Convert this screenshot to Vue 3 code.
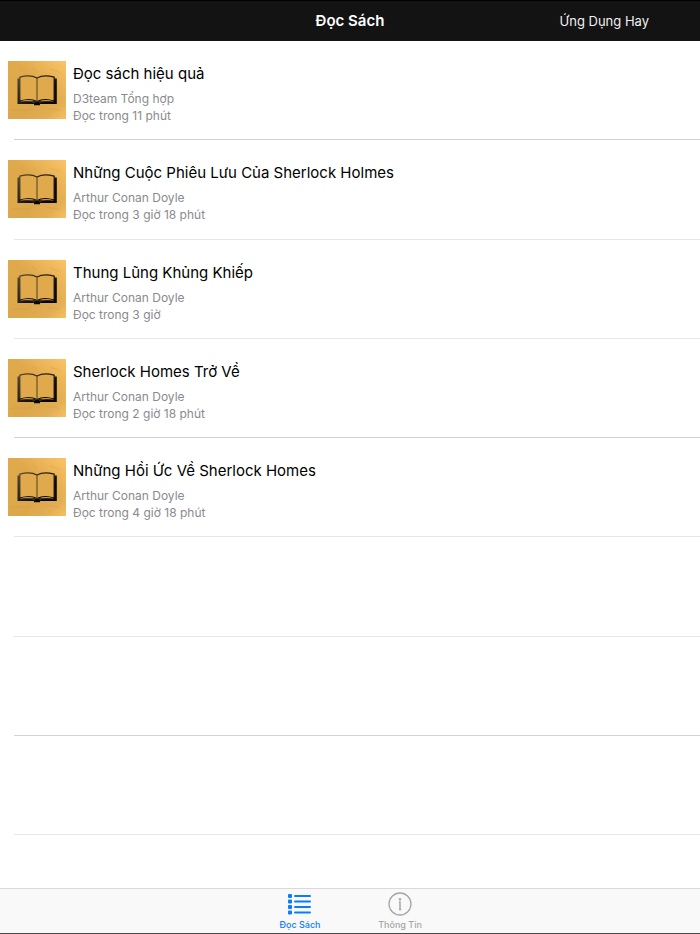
<script setup>
import { ref } from 'vue'

const books = [
  { title: 'Đọc sách hiệu quả', author: 'D3team Tổng hợp', time: 'Đọc trong 11 phút' },
  { title: 'Những Cuộc Phiêu Lưu Của Sherlock Holmes', author: 'Arthur Conan Doyle', time: 'Đọc trong 3 giờ 18 phút' },
  { title: 'Thung Lũng Khủng Khiếp', author: 'Arthur Conan Doyle', time: 'Đọc trong 3 giờ' },
  { title: 'Sherlock Homes Trở Về', author: 'Arthur Conan Doyle', time: 'Đọc trong 2 giờ 18 phút' },
  { title: 'Những Hồi Ức Về Sherlock Homes', author: 'Arthur Conan Doyle', time: 'Đọc trong 4 giờ 18 phút' },
]
const emptyRows = 3
const tab = ref('read')
</script>

<template>
  <div class="app">
    <svg class="defs" aria-hidden="true">
      <defs>
        <linearGradient id="gold" x1="0" y1="0" x2="1" y2="1">
          <stop offset="0" stop-color="#e0aa4c" />
          <stop offset="0.3" stop-color="#dfa94b" />
          <stop offset="0.6" stop-color="#dca74b" />
          <stop offset="0.82" stop-color="#e3ae53" />
          <stop offset="1" stop-color="#f6bf64" />
        </linearGradient>
        <linearGradient id="shine" x1="1" y1="0" x2="0.6" y2="0.45">
          <stop offset="0" stop-color="#ffc769" stop-opacity="0.9" />
          <stop offset="1" stop-color="#ffc769" stop-opacity="0" />
        </linearGradient>
        <linearGradient id="ink" gradientUnits="userSpaceOnUse" x1="10" y1="16" x2="32" y2="40">
          <stop offset="0" stop-color="#54482f" />
          <stop offset="0.5" stop-color="#2a251b" />
          <stop offset="1" stop-color="#070706" />
        </linearGradient>
      </defs>
    </svg>

    <header class="navbar">
      <h1 class="title">Đọc Sách</h1>
      <a class="more" href="#apps">Ứng Dụng Hay</a>
    </header>

    <main class="content">
      <ul class="list">
        <li v-for="book in books" :key="book.title" class="row">
          <a class="book" href="#book">
            <svg class="cover" viewBox="0 0 58 58" aria-hidden="true">
              <rect width="58" height="58" fill="url(#gold)" />
              <rect width="58" height="58" fill="url(#shine)" />
              <path d="M3 50c8-3 12 1 20-2M38 47c5 2 9 0 14 3M42 8c3 2 7 1 10 4M24 7l5 3" fill="none" stroke="#c18d35" stroke-opacity="0.25" />
              <path d="M9.500 17.500h2.300v22.500h34.400V17.500h2.600V43H32v1.200h-6V43H9.500z" fill="url(#ink)" />
              <path d="M11.800 16.200c6-1.700 12.700-1.700 17.200.8 4.500-2.500 11.200-2.500 17.200-.8v23.800c-6-1.600-12.200-1.600-17.200 1-5-2.600-11.200-2.600-17.200-1z" fill="#dfa94c" />
              <path d="M11.800 40V16.200c6-1.700 12.700-1.700 17.200.8 4.500-2.500 11.200-2.500 17.200-.8V40c-6-1.900-12.200-2.200-17.200.5-5-2.700-11.200-2.400-17.200-.5" fill="none" stroke="url(#ink)" stroke-width="1.200" />
              <path d="M29 17v24" stroke="#51411f" />
              <path d="M12.500 40.700c5-1.200 10-1 14 .7M31.500 41.400c4-1.700 9-1.900 14-.7" fill="none" stroke="#a47e3a" stroke-width="0.600" />
            </svg>
            <span class="text">
              <span class="name">{{ book.title }}</span>
              <span class="meta">{{ book.author }}</span>
              <span class="meta">{{ book.time }}</span>
            </span>
          </a>
        </li>
        <li v-for="n in emptyRows" :key="n" class="row" aria-hidden="true"></li>
      </ul>
    </main>

    <nav class="tabs">
      <button class="tab" :class="{ active: tab === 'read' }" type="button" @click="tab = 'read'">
        <svg class="icon" viewBox="0 0 24 24" aria-hidden="true">
          <g fill="currentColor">
            <rect x="0" y="2" width="4" height="4" rx="1" />
            <rect x="0" y="7.500" width="4" height="4" rx="1" />
            <rect x="0" y="13" width="4" height="4" rx="1" />
            <rect x="0" y="18.500" width="4" height="4" rx="1" />
            <rect x="6" y="3" width="17" height="2" rx="1" />
            <rect x="6" y="8.500" width="17" height="2" rx="1" />
            <rect x="6" y="14" width="17" height="2" rx="1" />
            <rect x="6" y="19.500" width="17" height="2" rx="1" />
          </g>
        </svg>
        <span>Đọc Sách</span>
      </button>
      <button class="tab" :class="{ active: tab === 'info' }" type="button" @click="tab = 'info'">
        <svg class="icon" viewBox="0 0 24 24" aria-hidden="true">
          <circle cx="12" cy="12" r="11" fill="none" stroke="currentColor" stroke-width="1.300" />
          <circle cx="12" cy="7.300" r="1.200" fill="currentColor" />
          <path d="M11 10h1v7.500M11 17.500h2.200" fill="none" stroke="currentColor" stroke-width="1.500" />
        </svg>
        <span>Thông Tin</span>
      </button>
    </nav>
  </div>
</template>

<style>
body {
  margin: 0;
  background: #fff;
}
</style>

<style scoped>
.app {
  display: flex;
  flex-direction: column;
  box-sizing: border-box;
  min-height: 100vh;
  font-family: Inter, "Noto Sans", sans-serif;
  color: #000;
}
.defs {
  position: absolute;
  width: 0;
  height: 0;
}
.navbar {
  display: grid;
  grid-template-columns: 1fr auto 1fr;
  align-items: center;
  box-sizing: border-box;
  height: 41px;
  padding: 0 51px;
  background: #131313;
  border-top: 1px solid #000;
  color: #fff;
}
.title {
  grid-column: 2;
  margin: 0;
  font-size: 15px;
  font-weight: 600;
  line-height: 20px;
}
.more {
  justify-self: end;
  color: #f0f0f0;
  font-size: 13px;
  line-height: 20px;
  text-decoration: none;
}
.content {
  display: flex;
  flex: 1;
  padding-bottom: 53px;
}
.list {
  display: grid;
  flex: 1;
  grid-auto-rows: minmax(99px, 1fr);
  margin: 0;
  padding: 0;
  list-style: none;
}
.row {
  background: linear-gradient(#e6e6e7, #e6e6e7) 14px 100% / 100% 1px no-repeat;
}
.row:nth-child(3n + 1) {
  background-image: linear-gradient(#d2d2d4, #d2d2d4);
}
.book {
  display: flex;
  gap: 7px;
  padding: 20px 8px 0;
  color: inherit;
  text-decoration: none;
}
.cover {
  display: block;
  flex: none;
  width: 58px;
  height: 58px;
}
.text {
  display: flex;
  flex-direction: column;
  padding-top: 3px;
}
.name {
  margin-bottom: 6px;
  font-size: 15px;
  line-height: 20px;
}
.meta {
  color: #8a8a8e;
  font-size: 12px;
  line-height: 17px;
}
.tabs {
  display: flex;
  justify-content: center;
  box-sizing: border-box;
  height: 46px;
  background: #f9f9f9;
  border-top: 1px solid #d9d9d9;
  border-bottom: 1px solid #4a4a4a;
}
.tab {
  display: flex;
  flex-direction: column;
  align-items: center;
  width: 100px;
  padding: 3px 0 0;
  border: 0;
  background: none;
  color: #a6a6a6;
  font-family: inherit;
  font-size: 9px;
  font-weight: 500;
  line-height: 12px;
  cursor: pointer;
}
.tab.active {
  color: #0a7cff;
}
.icon {
  width: 24px;
  height: 24px;
  margin-bottom: 3px;
}
</style>
